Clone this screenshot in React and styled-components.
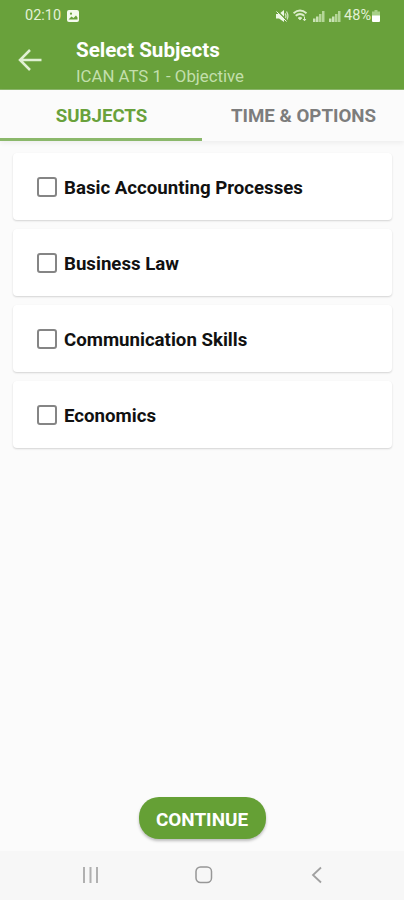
import React, { useState } from 'react'
import styled, { createGlobalStyle } from 'styled-components';

const subjects = [
  'Basic Accounting Processes',
  'Business Law',
  'Communication Skills',
  'Economics',
];

const tabs = ['SUBJECTS', 'TIME & OPTIONS'];

const Signal = () => (
  <svg width="12" height="12" viewBox="0 0 12 12">
    <path d="M0 8.500h2.500V12H0zM3 6.500h2.500V12H3z" fill="#c9e2b5" />
    <path d="M6 4h2.500v8H6zM9 1h2.500v11H9z" fill="#b4d697" />
  </svg>
);

const StatusIcons = () => (
  <StatusRight>
    <svg width="13" height="12" viewBox="0 0 13 12">
      <path d="M0 4h3L8 0v12L3 8.500H0z" fill="#eef7e6" />
      <path d="M9 3.500q2 2.500 0 5M10.500 1.500q2.800 4.500 0 9" stroke="#cfe5bc" strokeWidth="1.300" fill="none" />
      <path d="M1.500 1l10 10" stroke="#69a13b" strokeWidth="1.300" />
      <path d="M.5 1.500l10 10" stroke="#eef7e6" strokeWidth="1" />
    </svg>
    <svg width="16" height="13" viewBox="0 0 16 13" fill="none" stroke="#dcedcb" strokeWidth="1.900">
      <path d="M.5 4.200q6.500-5.400 13 0M2.700 6.800q4.300-3.600 8.600 0" />
      <path d="M5 9q2-1.800 4 0L7 11z" fill="#dcedcb" strokeWidth="0.600" />
      <path d="M11.500 7.500v4M10 10l1.500 1.800L13 10" strokeWidth="1" />
    </svg>
    <Signal />
    <Signal />
    <Percent>48%</Percent>
    <svg width="8" height="12" viewBox="0 0 8 12">
      <path d="M2.500 0h3v1.500H8V6H0V1.500h2.500z" fill="#a9cf88" />
      <path d="M0 5.500h8V11q0 1-1 1H1q-1 0-1-1z" fill="#fff" />
    </svg>
  </StatusRight>
);

const App = () => {
  const [activeTab, setActiveTab] = useState(0);
  const [selected, setSelected] = useState([]);

  const toggle = (name) => {
    setSelected((prev) =>
      prev.includes(name) ? prev.filter((item) => item !== name) : [...prev, name]
    );
  };

  return (
    <Screen>
      <GlobalStyle />
      <Header>
        <StatusBar>
          <Clock>02:10</Clock>
          <svg width="12" height="12" viewBox="0 0 12 12">
            <rect width="12" height="12" rx="2" fill="#f4faee" />
            <path d="M1.500 9.500l3-3 2 1.500L9 5.500l1.500 2v2z" fill="#69a13b" />
            <circle cx="4" cy="3.700" r="1.100" fill="#69a13b" />
          </svg>
          <StatusIcons />
        </StatusBar>
        <AppBar>
          <BackButton aria-label="Back">
            <svg width="24" height="22" viewBox="0 0 24 22" fill="none" stroke="#e0f0d3" strokeWidth="2.500">
              <path d="M23.500 11H2M12 1L2 11l10 10" />
            </svg>
          </BackButton>
          <Titles>
            <Title>Select Subjects</Title>
            <Subtitle>ICAN ATS 1 - Objective</Subtitle>
          </Titles>
        </AppBar>
      </Header>
      <TabBar>
        {tabs.map((tab, index) => (
          <Tab key={tab} $active={index === activeTab} onClick={() => setActiveTab(index)}>
            {tab}
          </Tab>
        ))}
      </TabBar>
      <Content>
        {subjects.map((name) => (
          <Card key={name} onClick={() => toggle(name)}>
            <CheckBox $checked={selected.includes(name)} />
            <Label>{name}</Label>
          </Card>
        ))}
      </Content>
      <Footer>
        <ContinueButton>CONTINUE</ContinueButton>
      </Footer>
      <NavBar>
        <svg width="18" height="16" viewBox="0 0 18 16" stroke="#b0b0b0" strokeWidth="2">
          <path d="M2 0v16M8.500 0v16M15 0v16" />
        </svg>
        <svg width="18" height="18" viewBox="0 0 18 18" fill="none" stroke="#979797" strokeWidth="1.500">
          <rect x="1" y="1" width="15.500" height="15.500" rx="4.500" />
        </svg>
        <svg width="18" height="18" viewBox="0 0 18 18" fill="none" stroke="#a0a0a0" strokeWidth="1.800">
          <path d="M13 1.500L5 9l8 7.500" />
        </svg>
      </NavBar>
    </Screen>
  );
};

export default App;

const GlobalStyle = createGlobalStyle`
  * {
    box-sizing: border-box;
  }
  body {
    margin: 0;
    font-family: Roboto, sans-serif;
  }
  button {
    border: none;
    padding: 0;
    background: none;
    font-family: inherit;
  }
  svg {
    display: block;
    flex-shrink: 0;
  }
`;

const Screen = styled.div`
  display: flex;
  flex-direction: column;
  height: 900px;
  background: #fbfbfb;
`;

const Header = styled.header`
  height: 90px;
  background: #69a13b;
  border-bottom: 1px solid #8db76c;
`;

const StatusBar = styled.div`
  display: flex;
  align-items: center;
  height: 31px;
  padding: 0 24px 0 25px;
`;

const Clock = styled.span`
  width: 42px;
  font-size: 14.500px;
  color: #e3f1d6;
`;

const StatusRight = styled.div`
  display: flex;
  align-items: center;
  gap: 4px;
  margin-left: auto;
`;

const Percent = styled.span`
  margin: 0 -3px 0 -1px;
  font-size: 14.500px;
  color: #e3f1d6;
`;

const AppBar = styled.div`
  display: flex;
  height: 58px;
  padding-left: 18px;
`;

const BackButton = styled.button`
  width: 58px;
  height: 58px;
`;

const Titles = styled.div`
  padding-top: 7px;
`;

const Title = styled.h1`
  margin: 0;
  font-size: 20.600px;
  font-weight: 700;
  line-height: 25px;
  color: #fff;
`;

const Subtitle = styled.p`
  margin: 2px 0 0;
  font-size: 16.800px;
  line-height: 22px;
  color: #c3dfac;
`;

const TabBar = styled.nav`
  display: flex;
  height: 51px;
  box-shadow: 0 2px 5px rgba(0, 0, 0, 0.06);
`;

const Tab = styled.button`
  flex: 1;
  padding: 3px 0 0 1px;
  border-bottom: 3px solid ${({ $active }) => ($active ? '#8bb86b' : 'transparent')};
  font-size: 18.700px;
  font-weight: 700;
  color: ${({ $active }) => ($active ? '#69a13b' : '#7d7d7d')};
`;

const Content = styled.main`
  display: flex;
  flex: 1;
  flex-direction: column;
  gap: 9px;
  padding: 12px 12px 0 13px;
`;

const Card = styled.div`
  display: flex;
  align-items: center;
  height: 67px;
  padding-left: 24px;
  border-radius: 4px;
  background: #fff;
  box-shadow: 0 1px 2px rgba(0, 0, 0, 0.16);
`;

const CheckBox = styled.span`
  width: 20px;
  height: 20px;
  margin-right: 7px;
  border: 2px solid #858585;
  border-radius: 3px;
  background: ${({ $checked }) => ($checked ? '#69a13b' : '#fff')};
`;

const Label = styled.span`
  padding-top: 2px;
  font-size: 18.660px;
  font-weight: 700;
  color: #111;
`;

const Footer = styled.div`
  display: flex;
  justify-content: center;
  height: 54px;
`;

const ContinueButton = styled.button`
  width: 127px;
  height: 42px;
  padding-top: 3px;
  border-radius: 20px;
  background: #65a035;
  box-shadow: 0 2px 3px rgba(0, 0, 0, 0.25);
  font-size: 18.900px;
  font-weight: 700;
  color: #fff;
`;

const NavBar = styled.div`
  display: flex;
  align-items: center;
  justify-content: space-between;
  height: 49px;
  padding: 0 78px 2px 82px;
  background: #f7f7f7;
`;
